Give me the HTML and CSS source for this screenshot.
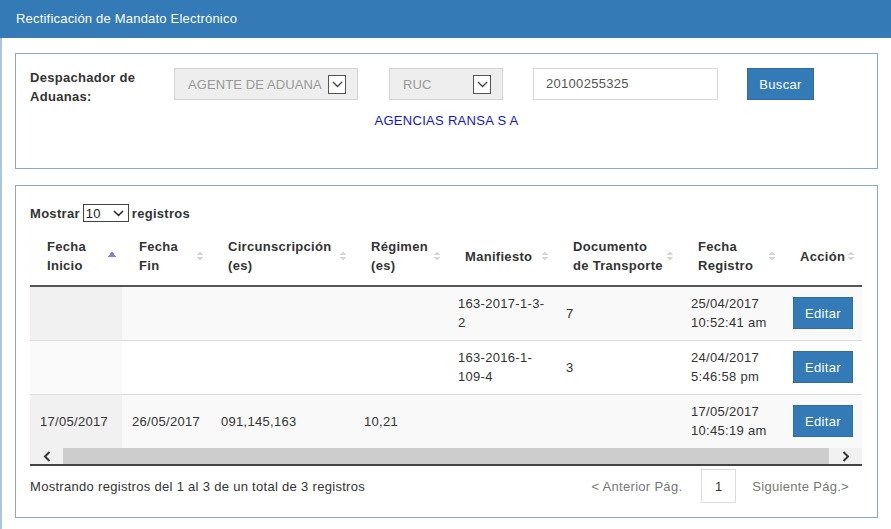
FILE: index.html
```html
<!DOCTYPE html>
<html lang="es">
<head>
<meta charset="utf-8">
<title>Rectificación de Mandato Electrónico</title>
<link rel="stylesheet" href="styles.css">
</head>
<body>
<div class="panel">
  <div class="panel-heading">Rectificación de Mandato Electrónico</div>
  <div class="panel-body">
    <section class="box filter-box">
      <div class="filter-row">
        <label class="filter-label">Despachador de Aduanas:</label>
        <div class="fake-select sel-agent">
          <span>AGENTE DE ADUANA</span>
          <span class="sel-arrow"><svg width="11" height="7" viewBox="0 0 11 7"><path d="M1 1l4.5 4.5L10 1" fill="none" stroke="#444" stroke-width="1.3"/></svg></span>
        </div>
        <div class="fake-select sel-ruc">
          <span>RUC</span>
          <span class="sel-arrow"><svg width="11" height="7" viewBox="0 0 11 7"><path d="M1 1l4.5 4.5L10 1" fill="none" stroke="#444" stroke-width="1.3"/></svg></span>
        </div>
        <div class="text-input">20100255325</div>
        <button class="btn-primary btn-buscar">Buscar</button>
      </div>
      <div class="company">AGENCIAS RANSA S A</div>
    </section>

    <section class="box table-box">
      <div class="length-row">
        <span>Mostrar</span>
        <span class="len-select"><span>10</span><svg width="11" height="7" viewBox="0 0 11 7"><path d="M1 1l4.5 4.5L10 1" fill="none" stroke="#222" stroke-width="1.5"/></svg></span>
        <span>registros</span>
      </div>
      <div class="scroll-wrap">
        <table class="grid">
          <colgroup>
            <col class="c1"><col class="c2"><col class="c3"><col class="c4"><col class="c5"><col class="c6"><col class="c7"><col class="c8">
          </colgroup>
          <thead>
            <tr>
              <th class="asc">Fecha<br>Inicio</th>
              <th>Fecha<br>Fin</th>
              <th>Circunscripción<br>(es)</th>
              <th>Régimen<br>(es)</th>
              <th>Manifiesto</th>
              <th>Documento<br>de Transporte</th>
              <th>Fecha<br>Registro</th>
              <th>Acción</th>
            </tr>
          </thead>
          <tbody>
            <tr class="odd">
              <td class="sorted"></td><td></td><td></td><td></td>
              <td>163-2017-1-3-<br>2</td><td>7</td><td>25/04/2017<br>10:52:41 am</td>
              <td><button class="btn-primary btn-edit">Editar</button></td>
            </tr>
            <tr class="even">
              <td class="sorted"></td><td></td><td></td><td></td>
              <td>163-2016-1-<br>109-4</td><td>3</td><td>24/04/2017<br>5:46:58 pm</td>
              <td><button class="btn-primary btn-edit">Editar</button></td>
            </tr>
            <tr class="odd">
              <td class="sorted">17/05/2017</td><td>26/05/2017</td><td>091,145,163</td><td>10,21</td>
              <td></td><td></td><td>17/05/2017<br>10:45:19 am</td>
              <td><button class="btn-primary btn-edit">Editar</button></td>
            </tr>
          </tbody>
        </table>
        <div class="hscroll">
          <span class="sb-btn"><svg width="8" height="11" viewBox="0 0 8 11"><path d="M6.5 1L2 5.5 6.5 10" fill="none" stroke="#333" stroke-width="2"/></svg></span>
          <span class="sb-thumb"></span>
          <span class="sb-btn"><svg width="8" height="11" viewBox="0 0 8 11"><path d="M1.5 1L6 5.5 1.5 10" fill="none" stroke="#333" stroke-width="2"/></svg></span>
        </div>
      </div>
      <div class="table-foot">
        <div class="info">Mostrando registros del 1 al 3 de un total de 3 registros</div>
        <div class="pager">
          <span class="pg-link">&lt; Anterior Pág.</span>
          <span class="pg-num">1</span>
          <span class="pg-link">Siguiente Pág.&gt;</span>
        </div>
      </div>
    </section>
  </div>
</div>
</body>
</html>
```

FILE: styles.css
```css
* { box-sizing: border-box; }
html, body { margin: 0; padding: 0; background: #fff; }
body {
  font-family: "Liberation Sans", Arial, sans-serif;
  font-size: 13px;
  color: #333;
  letter-spacing: 0.3px;
  overflow: hidden;
}
.panel { width: 891px; }
.panel-heading {
  height: 38px;
  background: #337ab7;
  color: #fff;
  padding: 0 16px;
  line-height: 38px;
  letter-spacing: 0.2px;
}
.panel-body {
  border-left: 2px solid #a9c5e0;
  padding: 15px 13px 12px 13px;
  min-height: 491px;
}
.box {
  border: 1px solid #8ca8c6;
  background: #fff;
}
.filter-box {
  height: 116px;
  padding: 14px 14px 0 14px;
}
.filter-row {
  display: flex;
  align-items: flex-start;
}
.filter-label {
  width: 144px;
  padding-right: 24px;
  font-weight: bold;
  line-height: 19px;
}
.fake-select {
  height: 32px;
  background: #eee;
  border: 1px solid #d3d3d3;
  color: #999;
  display: flex;
  align-items: center;
  justify-content: space-between;
  padding: 0 11px 0 13px;
  letter-spacing: 0.1px;
}
.sel-agent { width: 184px; }
.sel-ruc { width: 114px; margin-left: 31px; }
.sel-arrow {
  width: 18px;
  height: 19px;
  background: #fff;
  border: 1px solid #555;
  display: flex;
  align-items: center;
  justify-content: center;
}
.text-input {
  width: 185px;
  height: 32px;
  margin-left: 30px;
  border: 1px solid #d6d6d6;
  padding: 0 12px;
  line-height: 30px;
  color: #555;
}
.btn-primary {
  background: #337ab7;
  color: #fff;
  border: 1px solid #2e6da4;
  font-family: inherit;
  font-size: 13px;
  letter-spacing: 0.3px;
  padding: 0;
  cursor: pointer;
}
.btn-buscar {
  width: 67px;
  height: 32px;
  margin-left: 29px;
}
.company {
  text-align: center;
  color: #1414cc;
  margin-top: 7px;
  line-height: 16px;
}

.table-box {
  margin-top: 16px;
  height: 333px;
  padding: 18px 14px 0 14px;
}
.length-row {
  display: flex;
  align-items: center;
  gap: 3px;
  font-weight: bold;
  height: 18px;
}
.len-select {
  width: 46px;
  height: 18px;
  border: 1px solid #444;
  display: flex;
  align-items: center;
  justify-content: space-between;
  padding: 0 4px 0 2px;
  font-weight: normal;
  color: #222;
}
.scroll-wrap {
  margin-top: 5px;
  width: 832px;
  border-bottom: 2px solid #444;
}
.grid {
  width: 832px;
  table-layout: fixed;
  border-collapse: collapse;
}
.c1 { width: 92px; } .c2 { width: 89px; } .c3 { width: 143px; } .c4 { width: 94px; }
.c5 { width: 108px; } .c6 { width: 125px; } .c7 { width: 102px; } .c8 { width: 79px; }
.grid th {
  text-align: left;
  font-weight: bold;
  line-height: 19px;
  padding: 10px 8px 10px 17px;
  border-bottom: 2px solid #555;
  vertical-align: middle;
  white-space: nowrap;
  position: relative;
}
.grid th::after {
  content: "";
  position: absolute;
  right: 8px;
  top: 50%;
  width: 6px;
  height: 10px;
  margin-top: -5px;
  background:
    linear-gradient(to bottom right, transparent 50%, #d6d6d6 50%) 0 0 / 3px 4px no-repeat,
    linear-gradient(to bottom left, transparent 50%, #d6d6d6 50%) 3px 0 / 3px 4px no-repeat,
    linear-gradient(to top right, transparent 50%, #d6d6d6 50%) 0 6px / 3px 4px no-repeat,
    linear-gradient(to top left, transparent 50%, #d6d6d6 50%) 3px 6px / 3px 4px no-repeat;
}
.grid th.asc::after {
  right: 6px;
  width: 8px;
  height: 6px;
  margin-top: -5px;
  background:
    linear-gradient(to bottom right, transparent 50%, #8181d6 50%) 0 0 / 4px 6px no-repeat,
    linear-gradient(to bottom left, transparent 50%, #8181d6 50%) 4px 0 / 4px 6px no-repeat;
}
.grid td {
  line-height: 19px;
  padding: 7px 10px 8px 10px;
  border-top: 1px solid #ddd;
  vertical-align: middle;
}
.grid tbody tr:first-child td { border-top: none; }
.grid tr.odd td { background: #f9f9f9; }
.grid tr.odd td.sorted { background: #f1f1f1; }
.grid tr.even td { background: #fff; }
.grid tr.even td.sorted { background: #fafafa; }
.btn-edit {
  width: 60px;
  height: 32px;
  display: block;
}
.hscroll {
  display: flex;
  height: 16px;
  background: #f1f1f1;
}
.sb-btn {
  width: 33px;
  display: flex;
  align-items: center;
  justify-content: center;
}
.sb-thumb {
  flex: 1;
  background: #cdcdcd;
}
.table-foot {
  display: flex;
  justify-content: space-between;
  align-items: center;
  margin-top: 3px;
}
.pager {
  display: flex;
  align-items: center;
  color: #777;
  margin-right: 14px;
}
.pg-num {
  width: 35px;
  height: 34px;
  border: 1px solid #ddd;
  display: flex;
  align-items: center;
  justify-content: center;
  color: #333;
  margin: 0 16px 0 19px;
}
.pg-link:first-child { margin-left: 3px; }
```
